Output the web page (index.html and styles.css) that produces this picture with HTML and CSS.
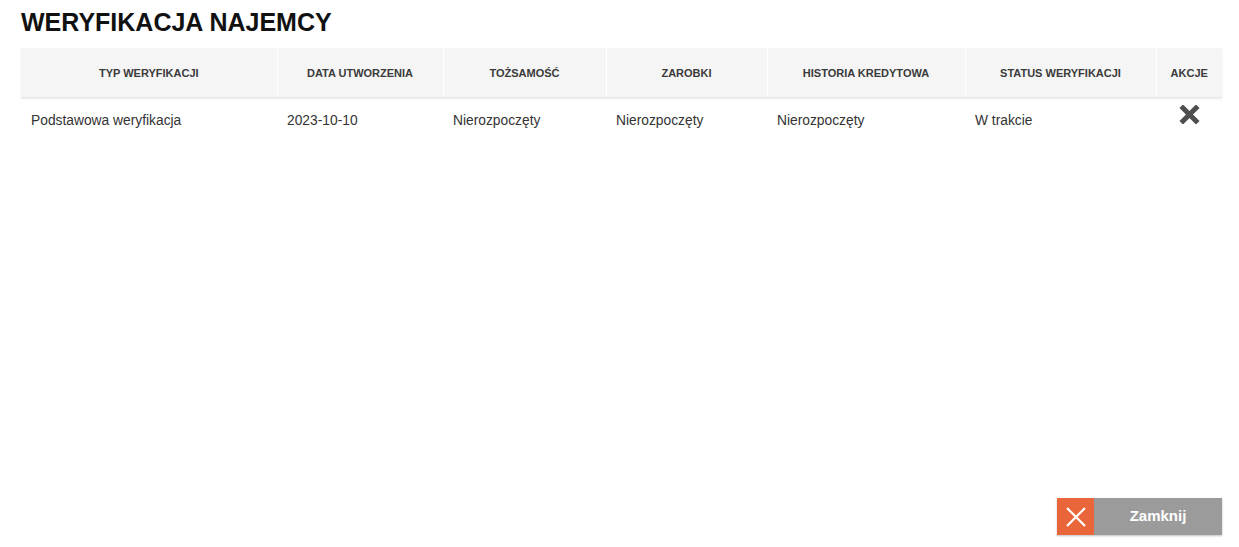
FILE: index.html
```html
<!DOCTYPE html>
<html lang="pl">
<head>
<meta charset="utf-8">
<title>Weryfikacja najemcy</title>
<link rel="stylesheet" href="styles.css">
</head>
<body>
<div class="page">
  <h1 class="title">WERYFIKACJA NAJEMCY</h1>
  <table class="grid">
    <colgroup>
      <col class="c1"><col class="c2"><col class="c3"><col class="c4"><col class="c5"><col class="c6"><col class="c7">
    </colgroup>
    <thead>
      <tr>
        <th>TYP WERYFIKACJI</th>
        <th>DATA UTWORZENIA</th>
        <th>TOŻSAMOŚĆ</th>
        <th>ZAROBKI</th>
        <th>HISTORIA KREDYTOWA</th>
        <th>STATUS WERYFIKACJI</th>
        <th>AKCJE</th>
      </tr>
    </thead>
    <tbody>
      <tr>
        <td>Podstawowa weryfikacja</td>
        <td>2023-10-10</td>
        <td>Nierozpoczęty</td>
        <td>Nierozpoczęty</td>
        <td>Nierozpoczęty</td>
        <td>W trakcie</td>
        <td class="actions">
          <svg class="remove" width="21" height="19" viewBox="0 0 21 19" aria-label="Usuń">
            <path d="M4 3 L17 16 M17 3 L4 16" stroke="#4f4f4f" stroke-width="5" stroke-linecap="square" fill="none"/>
          </svg>
        </td>
      </tr>
    </tbody>
  </table>
  <div class="footer">
    <button class="close-btn" type="button">
      <span class="close-icon">
        <svg width="22" height="20" viewBox="0 0 22 20">
          <path d="M2 1 L20 19 M20 1 L2 19" stroke="#fff" stroke-width="2.2" fill="none"/>
        </svg>
      </span>
      <span class="close-label">Zamknij</span>
    </button>
  </div>
</div>
</body>
</html>
```

FILE: styles.css
```css
html, body {
  margin: 0;
  padding: 0;
  background: #fff;
}
body {
  font-family: "Liberation Sans", Arial, sans-serif;
  color: #333;
}
.page {
  min-height: 100vh;
  box-sizing: border-box;
  display: flex;
  flex-direction: column;
  padding: 8px 17px 12px 21px;
}
.title {
  margin: 0 0 12px 0;
  font-size: 25px;
  line-height: 28px;
  font-weight: bold;
  color: #111;
}
.grid {
  width: 1201px;
  border-collapse: collapse;
  table-layout: fixed;
}
.c1 { width: 256px; }
.c2 { width: 166px; }
.c3 { width: 163px; }
.c4 { width: 161px; }
.c5 { width: 198px; }
.c6 { width: 191px; }
.c7 { width: 66px; }
.grid thead tr {
  background: #f5f5f5;
  box-shadow: 0 1px 2px rgba(0,0,0,0.08);
}
.grid th {
  height: 49px;
  padding: 0 4px;
  font-size: 11px;
  font-weight: bold;
  color: #3a3a3a;
  text-align: center;
  vertical-align: middle;
  border-right: 1px solid #fff;
  border-bottom: 1px solid #e6e6e6;
  white-space: nowrap;
}
.grid th:last-child {
  border-right: none;
}
.grid td {
  height: 46px;
  box-sizing: border-box;
  padding: 15px 10px 0 10px;
  font-size: 13.8px;
  line-height: 16px;
  color: #333;
  vertical-align: top;
  white-space: nowrap;
}
.grid td.actions {
  text-align: center;
  padding: 7px 0 0 0;
  line-height: 0;
}
.remove {
  display: inline-block;
}
.footer {
  margin-top: auto;
  display: flex;
  justify-content: flex-end;
}
.close-btn {
  display: flex;
  align-items: stretch;
  width: 165px;
  height: 37px;
  padding: 0;
  border: none;
  background: #9b9b9b;
  box-shadow: 0 1px 2px rgba(0,0,0,0.25);
  cursor: pointer;
  font-family: "Liberation Sans", Arial, sans-serif;
}
.close-icon {
  width: 37px;
  background: #e8663a;
  display: flex;
  align-items: center;
  justify-content: center;
}
.close-label {
  flex: 1;
  display: flex;
  align-items: center;
  justify-content: center;
  color: #fff;
  font-size: 15px;
  font-weight: bold;
  padding-bottom: 2px;
}
```
